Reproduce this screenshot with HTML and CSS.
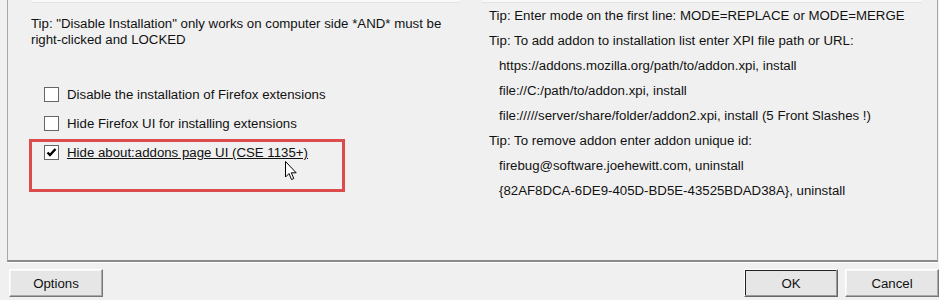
FILE: index.html
```html
<!DOCTYPE html>
<html>
<head>
<meta charset="utf-8">
<link rel="stylesheet" href="styles.css">
</head>
<body>
<div class="dialog">
  <div class="panel">
    <div class="col left">
      <div class="stub"></div>
      <p class="tip">Tip: "Disable Installation" only works on computer side *AND* must be right-clicked and LOCKED</p>
      <div class="checks">
        <label class="check"><span class="box"></span><span>Disable the installation of Firefox extensions</span></label>
        <label class="check"><span class="box"></span><span>Hide Firefox UI for installing extensions</span></label>
        <label class="check focus"><span class="box checked"><svg width="11" height="11" viewBox="0 0 11 11"><path d="M1.5 5.5 L4 8 L9.5 2" fill="none" stroke="#000" stroke-width="2.4"/></svg></span><span class="lbl">Hide about:addons page UI (CSE 1135+)</span></label>
      </div>
      <div class="highlight"></div>
      <svg class="cursor" width="13" height="20" viewBox="0 0 13 20"><path d="M0.5 0.5 L0.5 16 L4 12.5 L6.5 18.5 L8.8 17.5 L6.3 11.8 L11.2 11.8 Z" fill="#fff" stroke="#000" stroke-width="1" stroke-linejoin="miter"/></svg>
    </div>
    <div class="col right">
      <div class="stub"></div>
      <ul class="help">
        <li>Tip: Enter mode on the first line: MODE=REPLACE or MODE=MERGE</li>
        <li>Tip: To add addon to installation list enter XPI file path or URL:</li>
        <li class="ind">https://addons.mozilla.org/path/to/addon.xpi, install</li>
        <li class="ind">file://C:/path/to/addon.xpi, install</li>
        <li class="ind">file://///server/share/folder/addon2.xpi, install (5 Front Slashes !)</li>
        <li>Tip: To remove addon enter addon unique id:</li>
        <li class="ind">firebug@software.joehewitt.com, uninstall</li>
        <li class="ind">{82AF8DCA-6DE9-405D-BD5E-43525BDAD38A}, uninstall</li>
      </ul>
    </div>
  </div>
  <div class="buttons">
    <button class="btn">Options</button>
    <div class="spacer"></div>
    <button class="btn default">OK</button>
    <button class="btn">Cancel</button>
  </div>
</div>
</body>
</html>
```
FILE: styles.css
```css
html, body {
  margin: 0;
  padding: 0;
  background: #f0f0f0;
  overflow: hidden;
}
body {
  font-family: "Liberation Sans", Arial, sans-serif;
  font-size: 13.25px;
  color: #111;
  width: 939px;
  height: 300px;
}
.dialog {
  display: flex;
  flex-direction: column;
}
.panel {
  margin-left: 7px;
  width: 929px;
  height: 260px;
  border-left: 1px solid #a8a8a8;
  border-right: 1px solid #a8a8a8;
  border-bottom: 2px solid #8a8a8a;
  box-shadow: 0 1px 0 #fff;
  display: grid;
  grid-template-columns: 474px 1fr;
}
.col {
  position: relative;
}
.stub {
  height: 2px;
  background: #f8f8f8;
  border-bottom: 1px solid #e4e4e4;
}
.left .stub {
  margin-left: 24px;
  width: 428px;
}
.right .stub {
  width: 440px;
}
.tip {
  margin: 13px 0 0 23px;
  width: 430px;
  line-height: 16px;
}
.checks {
  margin: 39px 0 0 36px;
  display: flex;
  flex-direction: column;
  gap: 14px;
}
.check {
  display: flex;
  align-items: center;
  gap: 8px;
  height: 15px;
}
.box {
  border: 1px solid #666;
  background: #fff;
  display: flex;
  align-items: center;
  justify-content: center;
  box-sizing: border-box;
  width: 15px;
  height: 15px;
}
.lbl {
  text-decoration: underline;
}
.highlight {
  position: absolute;
  left: 21px;
  top: 139px;
  width: 310px;
  height: 47px;
  border: 3px solid #dc4c4a;
}
.cursor {
  position: absolute;
  left: 277px;
  top: 161px;
}
.help {
  list-style: none;
  margin: 0;
  padding: 0 0 0 7px;
}
.help li {
  line-height: 25px;
}
.help li.ind {
  padding-left: 10px;
}
.buttons {
  display: flex;
  padding: 7px 0 0 9px;
  gap: 7px;
}
.spacer {
  flex: 1;
}
.btn {
  font: inherit;
  color: #111;
  width: 94px;
  height: 28px;
  padding: 0;
  background: #e6e6e6;
  border: 1px solid;
  border-color: #fff #777 #777 #fff;
  box-shadow: inset -1px -1px 0 #aaa, inset 1px 1px 0 #f6f6f6;
}
.btn.default {
  border-color: #fff #666 #666 #fff;
  box-shadow: inset -1px -1px 0 #999, inset 0 0 0 1px #222;
}
```
